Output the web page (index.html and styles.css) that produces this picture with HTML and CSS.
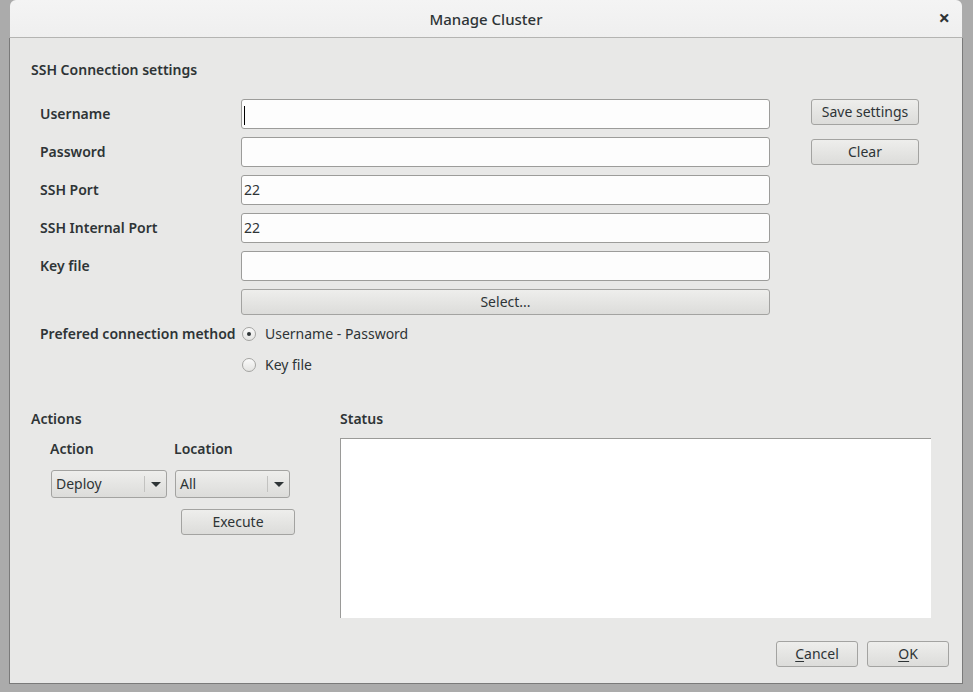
FILE: index.html
```html
<!DOCTYPE html>
<html>
<head>
<meta charset="utf-8">
<title>Manage Cluster</title>
<link rel="stylesheet" href="styles.css">
</head>
<body>
<div class="window">
  <div class="titlebar">
    <span class="title">Manage Cluster</span>
    <span class="close">×</span>
  </div>
  <div class="body">
    <section class="ssh">
      <div class="heading">SSH Connection settings</div>
      <div class="form">
        <div class="label">Username</div>
        <div class="entry"><span class="cursor"></span></div>
        <div class="side">
          <button class="btn side-btn">Save settings</button>
          <button class="btn side-btn">Clear</button>
        </div>
        <div class="label">Password</div>
        <div class="entry"></div>
        <div class="label">SSH Port</div>
        <div class="entry">22</div>
        <div class="label">SSH Internal Port</div>
        <div class="entry">22</div>
        <div class="label">Key file</div>
        <div class="entry"></div>
        <button class="btn select-btn">Select...</button>
        <div class="label label-top">Prefered connection method</div>
        <div class="radios">
          <div class="radio-row"><span class="radio checked"></span><span>Username - Password</span></div>
          <div class="radio-row"><span class="radio"></span><span>Key file</span></div>
        </div>
      </div>
    </section>
    <section class="lower">
      <div class="actions">
        <div class="heading">Actions</div>
        <div class="action-grid">
          <div class="label">Action</div>
          <div class="label">Location</div>
          <div class="combo combo-action"><span class="combo-text">Deploy</span><span class="combo-sep"></span><span class="arrow"></span></div>
          <div class="combo combo-loc"><span class="combo-text">All</span><span class="combo-sep"></span><span class="arrow"></span></div>
          <button class="btn exec-btn">Execute</button>
        </div>
      </div>
      <div class="status">
        <div class="heading status-heading">Status</div>
        <div class="status-box"></div>
      </div>
    </section>
    <footer class="footer">
      <button class="btn foot-btn"><u>C</u>ancel</button>
      <button class="btn foot-btn"><u>O</u>K</button>
    </footer>
  </div>
</div>
</body>
</html>
```

FILE: styles.css
```css
* { box-sizing: border-box; }
html, body {
  margin: 0;
  padding: 0;
  background: #ababab;
  font-family: "Noto Sans", "DejaVu Sans", sans-serif;
  font-size: 14px;
  color: #2e3436;
}
.window {
  margin-left: 9px;
  width: 954px;
  height: 684px;
  display: flex;
  flex-direction: column;
}
.titlebar {
  height: 38px;
  margin: 0 1px;
  background: linear-gradient(#f4f4f4, #efefef);
  border-radius: 6px 6px 0 0;
  border-bottom: 1px solid #b4b4b2;
  position: relative;
  display: flex;
  align-items: center;
  justify-content: center;
}
.title {
  font-size: 15px;
  font-weight: 500;
  color: #2e3436;
}
.close {
  position: absolute;
  right: 12px;
  top: 7px;
  font-size: 20px;
  font-weight: 700;
  color: #2e3436;
  line-height: 22px;
}
.body {
  flex: 1;
  background: #e8e8e7;
  border: 1px solid #7a7a7a;
  border-top: none;
  padding: 22px 0 0 21px;
  display: flex;
  flex-direction: column;
}
.heading {
  font-weight: 600;
  line-height: 20px;
  height: 20px;
}
.form {
  margin-top: 19px;
  margin-left: 9px;
  display: grid;
  grid-template-columns: 201px 529px auto;
  grid-template-rows: repeat(5, 30px) 26px auto;
  row-gap: 8px;
}
.form > .label { grid-column: 1; }
.form > .entry { grid-column: 2; }
.label {
  font-weight: 600;
  line-height: 20px;
  align-self: center;
}
.label-top { align-self: start; }
.entry {
  height: 30px;
  background: #fdfdfd;
  border: 1px solid #9c9c9a;
  border-radius: 3px;
  padding: 0 2px;
  line-height: 28px;
  font-size: 14px;
}
.cursor {
  display: inline-block;
  width: 1px;
  height: 19px;
  background: #000;
  vertical-align: middle;
}
.side {
  grid-row: 1 / span 3;
  grid-column: 3;
  padding-left: 41px;
  display: flex;
  flex-direction: column;
  gap: 14px;
  align-items: flex-start;
}
.btn {
  font-family: inherit;
  font-size: 14px;
  color: #2e3436;
  background: linear-gradient(#eeeeec, #dcdcda);
  border: 1px solid #a3a3a1;
  border-radius: 3px;
  height: 26px;
  padding: 0;
  margin: 0;
  line-height: 24px;
  cursor: default;
}
.side-btn { width: 108px; }
.select-btn {
  grid-row: 6;
  grid-column: 2;
}
.form > .label-top { grid-row: 7; margin-top: 1px; }
.radios {
  grid-row: 7;
  grid-column: 2;
  display: flex;
  flex-direction: column;
  gap: 11px;
  margin-top: 1px;
}
.radio-row {
  height: 20px;
  display: flex;
  align-items: center;
  gap: 9px;
  padding-left: 1px;
  line-height: 20px;
}
.radio {
  width: 14px;
  height: 14px;
  border-radius: 50%;
  border: 1px solid #a4a4a2;
  background: linear-gradient(#fafafa, #e4e4e2);
  display: flex;
  align-items: center;
  justify-content: center;
}
.radio.checked::after {
  content: "";
  width: 4px;
  height: 4px;
  border-radius: 50%;
  background: #2e3436;
}
.lower {
  margin-top: 34px;
  display: flex;
}
.actions { width: 309px; }
.action-grid {
  margin-top: 10px;
  margin-left: 19px;
  display: grid;
  grid-template-columns: 124px 120px;
  grid-template-rows: 20px 28px 26px;
  row-gap: 11px;
}
.combo {
  margin-left: 1px;
  height: 28px;
  border: 1px solid #a3a3a1;
  border-radius: 3px;
  background: linear-gradient(#eeeeec, #dcdcda);
  display: flex;
  align-items: center;
  padding-left: 4px;
}
.combo-action { width: 116px; }
.combo-loc { width: 115px; }
.combo-text { flex: 1; line-height: 26px; }
.combo-sep {
  width: 1px;
  height: 16px;
  background: #c2c2c0;
  margin-right: 6px;
}
.arrow {
  width: 0;
  height: 0;
  border-left: 5px solid transparent;
  border-right: 5px solid transparent;
  border-top: 5px solid #2e3436;
  margin-right: 5px;
}
.exec-btn {
  grid-row: 3;
  grid-column: 2;
  width: 114px;
  margin-left: 7px;
}
.status { width: 591px; }
.status-box {
  margin-top: 9px;
  height: 180px;
  background: #fff;
  border-top: 1px solid #9a9a98;
  border-left: 1px solid #9a9a98;
}
.footer {
  margin-top: 23px;
  display: flex;
  justify-content: flex-end;
  gap: 9px;
  padding-right: 13px;
}
.foot-btn { width: 82px; }
.foot-btn u { text-underline-offset: 2px; }
```
